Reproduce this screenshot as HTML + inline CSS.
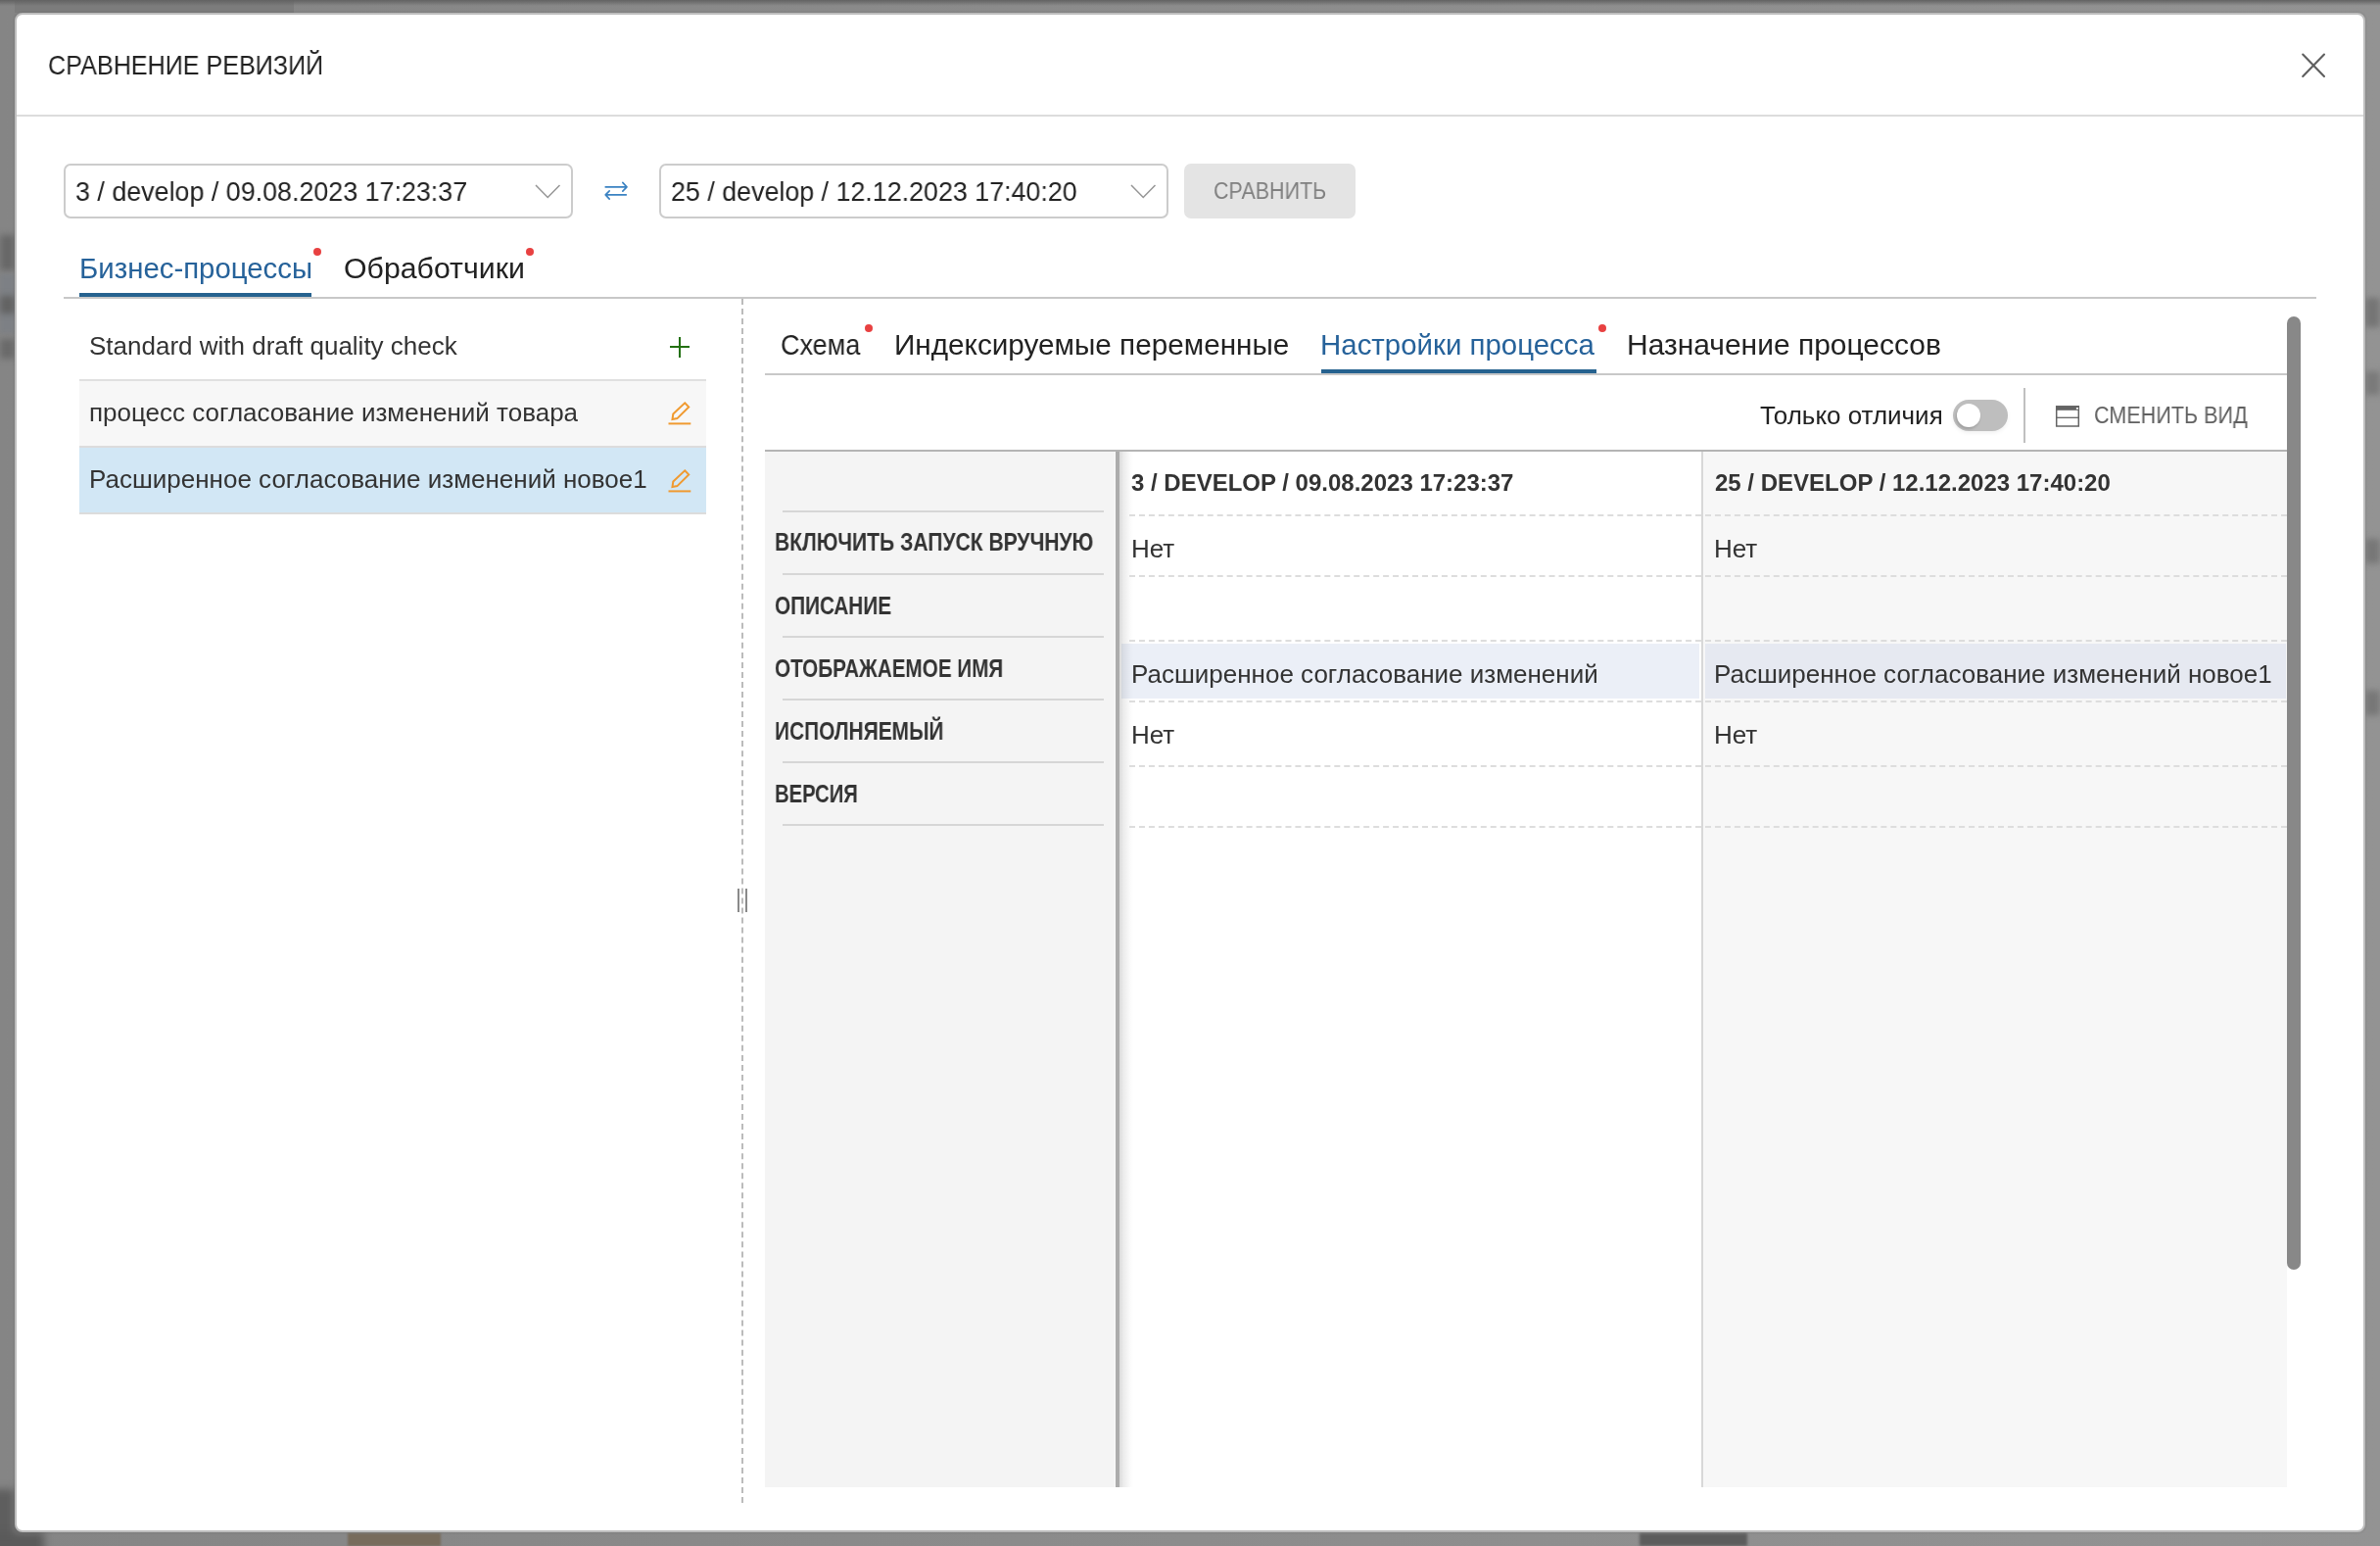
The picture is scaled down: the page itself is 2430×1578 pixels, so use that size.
<!DOCTYPE html>
<html><head><meta charset="utf-8">
<style>
html,body{margin:0;padding:0;}
body{width:2430px;height:1578px;position:relative;overflow:hidden;background:linear-gradient(90deg,#858585,#8c8c8c 50%,#939393);font-family:"Liberation Sans",sans-serif;}
.a{position:absolute;}
.t{position:absolute;white-space:nowrap;line-height:1;transform-origin:0 0;will-change:transform;}
.modal{position:absolute;left:15px;top:13px;width:2396px;height:1547px;border:2px solid #bebebe;border-radius:8px;background:#fff;box-shadow:0 0 3px rgba(0,0,0,0.15);}
</style></head>
<body>
<!-- background overlay variations -->
<div class="a" style="left:15px;top:0;width:285px;height:13px;background:#7c7c7c;"></div>
<div class="a" style="left:0;top:0;width:2430px;height:6px;background:linear-gradient(#626262,rgba(128,128,128,0));"></div>
<div class="a" style="left:0;top:240px;width:15px;height:36px;background:#686868;filter:blur(3px)"></div>
<div class="a" style="left:0;top:280px;width:15px;height:60px;background:#7d8085;filter:blur(2px)"></div>
<div class="a" style="left:0;top:302px;width:15px;height:18px;background:#636363;filter:blur(3px)"></div>
<div class="a" style="left:0;top:346px;width:15px;height:20px;background:#6a6a6a;filter:blur(3px)"></div>
<div class="a" style="left:-10px;top:1520px;width:25px;height:70px;background:#5e5e5e;filter:blur(4px)"></div>
<div class="a" style="left:-10px;top:1564px;width:55px;height:24px;background:#5a5a5a;filter:blur(4px)"></div>
<div class="a" style="left:355px;top:1565px;width:95px;height:13px;background:#786c5c;filter:blur(1px)"></div>
<div class="a" style="left:1674px;top:1565px;width:110px;height:13px;background:#5c5c5c;filter:blur(1.5px)"></div>
<div class="a" style="left:2415px;top:304px;width:15px;height:30px;background:#757575;filter:blur(3px)"></div>
<div class="a" style="left:2415px;top:379px;width:15px;height:24px;background:#7a7a7a;filter:blur(3px)"></div>
<div class="a" style="left:2415px;top:550px;width:15px;height:25px;background:#777;filter:blur(3px)"></div>
<div class="a" style="left:2415px;top:705px;width:15px;height:25px;background:#777;filter:blur(3px)"></div>

<div class="modal"></div>

<!-- header -->
<div class="t" style="left:49px;top:52.5px;font-size:28px;color:#222;transform:scaleX(0.897)">СРАВНЕНИЕ РЕВИЗИЙ</div>
<svg class="a" style="left:2340px;top:44px" width="44" height="46" viewBox="0 0 44 46">
 <path d="M11.2 11.6 L33 34 M33 11.6 L11.2 34" stroke="#5f5f5f" stroke-width="2.1" stroke-linecap="round" fill="none"/>
</svg>
<div class="a" style="left:17px;top:117px;width:2396px;height:2px;background:#dcdcdc"></div>

<!-- selects -->
<div class="a" style="left:65px;top:167px;width:516px;height:52px;border:2px solid #cccccc;border-radius:7px;"></div>
<div class="t" style="left:76.7px;top:181.5px;font-size:28px;color:#222;transform:scaleX(0.959)">3 / develop / 09.08.2023 17:23:37</div>
<svg class="a" style="left:540px;top:180px" width="40" height="30"><path d="M7 9 L19.25 21.5 L31.5 9" stroke="#959595" stroke-width="1.5" fill="none"/></svg>

<svg class="a" style="left:610px;top:180px" width="40" height="30">
 <path d="M8.2 10.9 H29.6 M25.8 6.4 L30 10.9 L25.8 15.1 M29.3 18.9 H8.6 M12.2 14.8 L8.2 18.9 L12.2 23.1" stroke="#3a82c2" stroke-width="1.65" stroke-linecap="round" stroke-linejoin="round" fill="none"/>
</svg>

<div class="a" style="left:673px;top:167px;width:516px;height:52px;border:2px solid #cccccc;border-radius:7px;"></div>
<div class="t" style="left:685px;top:181.5px;font-size:28px;color:#222;transform:scaleX(0.958)">25 / develop / 12.12.2023 17:40:20</div>
<svg class="a" style="left:1148px;top:180px" width="40" height="30"><path d="M7 9 L19.25 21.5 L31.5 9" stroke="#959595" stroke-width="1.5" fill="none"/></svg>

<div class="a" style="left:1209px;top:167px;width:175px;height:56px;background:#e4e4e4;border-radius:7px;"></div>
<div class="t" style="left:1239px;top:184.1px;font-size:23px;color:#808080;transform:scaleX(0.934)">СРАВНИТЬ</div>

<!-- top tabs -->
<div class="t" style="left:80.7px;top:259.5px;font-size:29px;color:#26629a;transform:scaleX(1.013)">Бизнес-процессы</div>
<div class="a" style="left:320px;top:253px;width:8px;height:8px;border-radius:50%;background:#e84141"></div>
<div class="t" style="left:350.7px;top:259.5px;font-size:29px;color:#222;transform:scaleX(1.044)">Обработчики</div>
<div class="a" style="left:537px;top:253px;width:8px;height:8px;border-radius:50%;background:#e84141"></div>
<div class="a" style="left:81px;top:299px;width:237px;height:4px;background:#26628f"></div>
<div class="a" style="left:65px;top:303px;width:2300px;height:2px;background:#c8c8c8"></div>

<!-- vertical dashed divider -->
<div class="a" style="left:757px;top:305px;width:0;height:1229px;border-left:2px dashed #bbbbbb"></div>
<div class="a" style="left:753px;top:907px;width:2px;height:24px;background:#8a8a8a"></div>
<div class="a" style="left:761px;top:907px;width:2px;height:24px;background:#8a8a8a"></div>

<!-- left list -->
<div class="t" style="left:90.8px;top:340px;font-size:26px;color:#333">Standard with draft quality check</div>
<div class="a" style="left:684px;top:353px;width:20px;height:2px;background:#237012"></div>
<div class="a" style="left:693px;top:343.5px;width:2px;height:21px;background:#237012"></div>

<div class="a" style="left:81px;top:387px;width:640px;height:2px;background:#e0e0e0"></div>
<div class="a" style="left:81px;top:389px;width:640px;height:66px;background:#f7f7f7"></div>
<div class="t" style="left:90.6px;top:407.6px;font-size:26px;color:#333">процесс согласование изменений товара</div>
<div class="a" style="left:81px;top:455px;width:640px;height:2px;background:#dcdcdc"></div>
<div class="a" style="left:81px;top:457px;width:640px;height:66px;background:#d2e7f5"></div>
<div class="t" style="left:90.6px;top:475.9px;font-size:26px;color:#333">Расширенное согласование изменений новое1</div>
<div class="a" style="left:81px;top:523px;width:640px;height:2px;background:#dcdcdc"></div>

<svg class="a" style="left:676px;top:404px" width="36" height="36">
 <path d="M23.2 7.3 L27.2 11.4 L15.4 23.1 L10.5 24.1 L11.3 18.6 Z" stroke="#f09a30" stroke-width="2" stroke-linejoin="miter" fill="none"/>
 <path d="M6.5 28.4 H29.3" stroke="#f09a30" stroke-width="2" fill="none"/>
</svg>
<svg class="a" style="left:676px;top:473px" width="36" height="36">
 <path d="M23.2 7.3 L27.2 11.4 L15.4 23.1 L10.5 24.1 L11.3 18.6 Z" stroke="#f09a30" stroke-width="2" stroke-linejoin="miter" fill="none"/>
 <path d="M6.5 28.4 H29.3" stroke="#f09a30" stroke-width="2" fill="none"/>
</svg>

<!-- inner tabs -->
<div class="t" style="left:796.7px;top:337.6px;font-size:29px;color:#222;transform:scaleX(0.931)">Схема</div>
<div class="a" style="left:883px;top:331px;width:8px;height:8px;border-radius:50%;background:#e84141"></div>
<div class="t" style="left:913.2px;top:337.6px;font-size:29px;color:#222;transform:scaleX(1.024)">Индексируемые переменные</div>
<div class="t" style="left:1348px;top:337.6px;font-size:29px;color:#26629a;transform:scaleX(1.015)">Настройки процесса</div>
<div class="a" style="left:1632px;top:331px;width:8px;height:8px;border-radius:50%;background:#e84141"></div>
<div class="t" style="left:1660.8px;top:337.6px;font-size:29px;color:#222;transform:scaleX(1.034)">Назначение процессов</div>
<div class="a" style="left:1349px;top:377px;width:281px;height:4px;background:#26628f"></div>
<div class="a" style="left:781px;top:381px;width:1554px;height:2px;background:#c8c8c8"></div>

<!-- scrollbar -->
<div class="a" style="left:2335px;top:323px;width:14px;height:973px;border-radius:7px;background:#888"></div>

<!-- toolbar -->
<div class="t" style="left:1797.2px;top:411.75px;font-size:25px;color:#222;transform:scaleX(1.039)">Только отличия</div>
<div class="a" style="left:1994px;top:408px;width:56px;height:32px;border-radius:16px;background:#bebebe;box-shadow:0 2px 4px rgba(0,0,0,0.06)"></div>
<div class="a" style="left:1998px;top:412px;width:24px;height:24px;border-radius:50%;background:#fff;box-shadow:-1px 2px 3px rgba(0,0,0,0.18)"></div>
<div class="a" style="left:2066px;top:396px;width:2px;height:56px;background:#c0c0c0"></div>
<svg class="a" style="left:2094px;top:408px" width="36" height="32">
 <rect x="5.7" y="6.9" width="22.6" height="20.1" stroke="#646464" stroke-width="1.5" fill="none"/>
 <rect x="5" y="6.2" width="24" height="4.6" fill="#646464"/>
 <rect x="25.9" y="8" width="2" height="1.7" fill="#fff"/>
 <path d="M5 18.3 H29" stroke="#646464" stroke-width="1.3"/>
</svg>
<div class="t" style="left:2138px;top:413.05px;font-size:23px;color:#606060;transform:scaleX(0.938)">СМЕНИТЬ ВИД</div>

<!-- table -->
<div class="a" style="left:781px;top:459px;width:1554px;height:2px;background:#b4b4b4"></div>
<div class="a" style="left:781px;top:461px;width:357px;height:1057px;background:#f4f4f4"></div>
<div class="a" style="left:1138px;top:461px;width:1px;height:1057px;background:#f8f8f8"></div>
<div class="a" style="left:1139px;top:461px;width:4px;height:1057px;background:#acacac"></div>
<div class="a" style="left:1739px;top:461px;width:596px;height:1057px;background:#f7f7f7"></div>
<div class="a" style="left:1737px;top:461px;width:2px;height:1057px;background:#d8d8d8"></div>

<!-- left panel separators -->
<div class="a" style="left:799px;top:521px;width:328px;height:2px;background:#d6d6d6"></div>
<div class="a" style="left:799px;top:585px;width:328px;height:2px;background:#d6d6d6"></div>
<div class="a" style="left:799px;top:649px;width:328px;height:2px;background:#d6d6d6"></div>
<div class="a" style="left:799px;top:713px;width:328px;height:2px;background:#d6d6d6"></div>
<div class="a" style="left:799px;top:777px;width:328px;height:2px;background:#d6d6d6"></div>
<div class="a" style="left:799px;top:841px;width:328px;height:2px;background:#d6d6d6"></div>

<!-- highlight row -->
<div class="a" style="left:1145px;top:657px;width:590px;height:56px;background:#ebeff7"></div>
<div class="a" style="left:1741px;top:657px;width:593px;height:56px;background:#e6e9f1"></div>
<div class="a" style="left:1143px;top:461px;width:14px;height:1057px;background:linear-gradient(90deg,rgba(0,0,0,0.14),rgba(0,0,0,0.075) 30%,rgba(0,0,0,0.02) 75%,rgba(0,0,0,0))"></div>

<!-- dashed row lines -->
<div class="a" style="left:1153px;top:525px;width:1182px;height:0;border-top:2px dashed #dddddd"></div>
<div class="a" style="left:1153px;top:587px;width:1182px;height:0;border-top:2px dashed #dddddd"></div>
<div class="a" style="left:1153px;top:653px;width:1182px;height:0;border-top:2px dashed #dddddd"></div>
<div class="a" style="left:1153px;top:715px;width:1182px;height:0;border-top:2px dashed #dddddd"></div>
<div class="a" style="left:1153px;top:781px;width:1182px;height:0;border-top:2px dashed #dddddd"></div>
<div class="a" style="left:1153px;top:843px;width:1182px;height:0;border-top:2px dashed #dddddd"></div>

<!-- labels -->
<div class="t" style="left:790.6px;top:541.2px;font-size:25px;font-weight:bold;color:#333;transform:scaleX(0.8426)">ВКЛЮЧИТЬ ЗАПУСК ВРУЧНУЮ</div>
<div class="t" style="left:790.6px;top:605.5px;font-size:25px;font-weight:bold;color:#333;transform:scaleX(0.829)">ОПИСАНИЕ</div>
<div class="t" style="left:790.6px;top:669.9px;font-size:25px;font-weight:bold;color:#333;transform:scaleX(0.827)">ОТОБРАЖАЕМОЕ ИМЯ</div>
<div class="t" style="left:790.6px;top:733.5px;font-size:25px;font-weight:bold;color:#333;transform:scaleX(0.836)">ИСПОЛНЯЕМЫЙ</div>
<div class="t" style="left:790.6px;top:797.8px;font-size:25px;font-weight:bold;color:#333;transform:scaleX(0.81)">ВЕРСИЯ</div>

<!-- values -->
<div class="t" style="left:1154.5px;top:480.6px;font-size:24px;font-weight:bold;color:#333">3 / DEVELOP / 09.08.2023 17:23:37</div>
<div class="t" style="left:1750.5px;top:480.6px;font-size:24px;font-weight:bold;color:#333">25 / DEVELOP / 12.12.2023 17:40:20</div>
<div class="t" style="left:1154.7px;top:547px;font-size:26px;color:#333">Нет</div>
<div class="t" style="left:1750.4px;top:547px;font-size:26px;color:#333">Нет</div>
<div class="t" style="left:1154.7px;top:675.1px;font-size:26px;color:#333">Расширенное согласование изменений</div>
<div class="t" style="left:1750.4px;top:675.1px;font-size:26px;color:#333">Расширенное согласование изменений новое1</div>
<div class="t" style="left:1154.7px;top:736.7px;font-size:26px;color:#333">Нет</div>
<div class="t" style="left:1750.4px;top:736.7px;font-size:26px;color:#333">Нет</div>

</body></html>
